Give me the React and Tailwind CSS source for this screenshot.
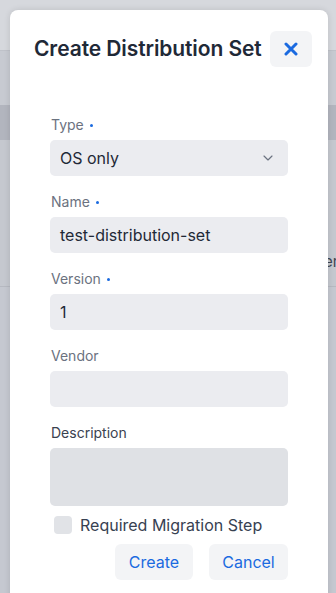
import { ChevronDown } from "lucide-react";

function Label({ text, required, dark }) {
  return (
    <div
      className={`h-5 mb-[5px] text-[14px] leading-5 pl-px ${
        dark ? "text-[#3a4250]" : "text-[#6b7280]"
      }`}
    >
      {text}
      {required && (
        <span className="inline-block align-middle w-[3px] h-[3px] rounded-full bg-[#1a6ae0] ml-[6px] mb-[2px]" />
      )}
    </div>
  );
}

function Field({ label, required, value, dark }) {
  return (
    <div className="mb-4">
      <Label text={label} required={required} dark={dark} />
      <div className="h-9 rounded-[5px] bg-[#ebecf0] px-[10px] flex items-center text-[16px] text-[#1f2937]">
        {value}
      </div>
    </div>
  );
}

export default function App() {
  return (
    <div
      className="relative h-[593px] w-[336px] overflow-hidden bg-[#c5c8cf]"
      style={{ fontFamily: "Inter, 'Noto Sans', sans-serif" }}
    >
      {/* page behind the overlay */}
      <div className="flex flex-col">
        <div className="h-[51px] bg-[#d6d8dd] border-b border-[#bfc2c9]" />
        <div className="h-[54px] bg-[#c7cad1]" />
        <div className="h-[35px] bg-[#b2b5be]" />
        <div className="h-[147px] bg-[#c5c8cf] border-b border-[#b6b9c1] pt-[112px] pl-[324px] text-[15px] leading-5 text-[#3d4452] whitespace-nowrap">
          er
        </div>
        <div className="h-[306px] bg-[#c5c8d0]" />
      </div>

      {/* dialog */}
      <div className="absolute left-[10px] top-[10px] w-[318px] h-[600px] bg-white rounded-lg shadow-[0_0_6px_rgba(0,0,0,0.12)]">
        <div className="flex items-center justify-between pt-[21px] pl-6 pr-4">
          <h2 className="text-[21px] font-semibold text-[#1f2937] leading-7 tracking-[-0.1px]">
            Create Distribution Set
          </h2>
          <button className="w-[42px] h-9 rounded-md bg-[#f3f4f6] flex items-center justify-center">
            <svg width="14" height="14" viewBox="0 0 14 14">
              <path
                d="M2 2 L12 12 M12 2 L2 12"
                stroke="#1a6ae0"
                strokeWidth="3"
                strokeLinecap="round"
              />
            </svg>
          </button>
        </div>

        <div className="px-10 pt-12">
          <div className="mb-4">
            <Label text="Type" required />
            <div className="h-9 rounded-[5px] bg-[#ebecf0] pl-[10px] pr-3 flex items-center justify-between text-[16px] text-[#1f2937]">
              <span>OS only</span>
              <ChevronDown size={16} strokeWidth={1.75} className="text-[#6b7280]" />
            </div>
          </div>
          <Field label="Name" required value="test-distribution-set" />
          <Field label="Version" required value="1" />
          <Field label="Vendor" value="" />

          <div>
            <Label text="Description" dark />
            <div className="h-[58px] rounded-[5px] bg-[#dfe1e5]" />
          </div>

          <div className="flex items-center mt-[7px] pl-1 h-6">
            <span className="w-[18px] h-[18px] rounded bg-[#e1e3e7]" />
            <span className="ml-2 text-[16px] text-[#374151]">Required Migration Step</span>
          </div>

          <div className="flex justify-end gap-4 mt-[7px]">
            <button className="w-[78px] h-9 rounded-md bg-[#f3f4f6] text-[16px] text-[#1a6ae0]">
              Create
            </button>
            <button className="w-[79px] h-9 rounded-md bg-[#f3f4f6] text-[16px] text-[#1a6ae0]">
              Cancel
            </button>
          </div>
        </div>
      </div>
    </div>
  );
}
